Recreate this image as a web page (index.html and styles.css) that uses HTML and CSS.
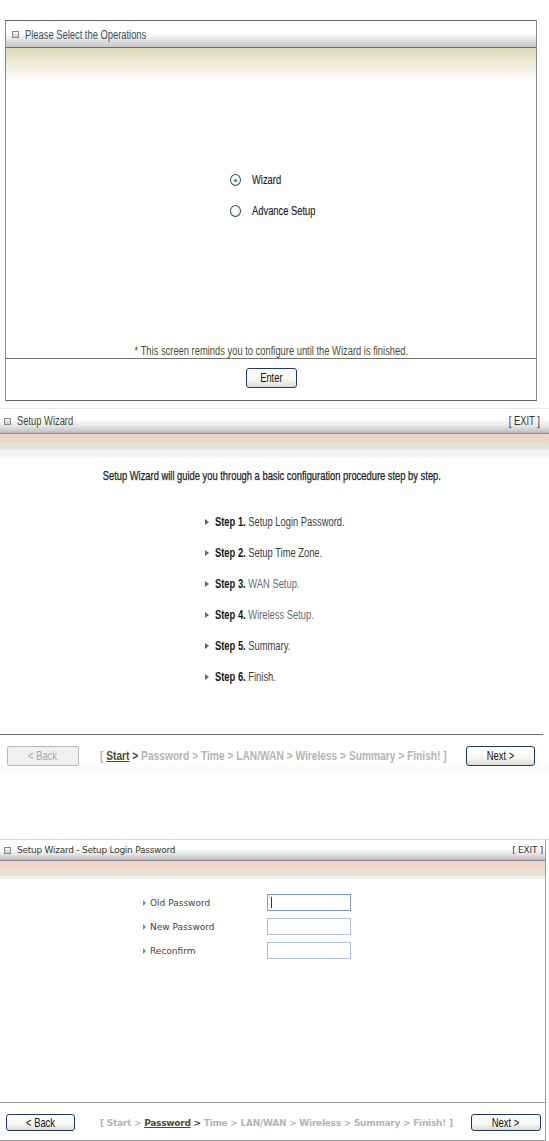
FILE: index.html
```html
<!DOCTYPE html>
<html>
<head>
<meta charset="utf-8">
<link rel="stylesheet" href="styles.css">
</head>
<body>
<div class="panel ops">
  <div class="hdr"><span class="sq"></span><span class="ttl nx">Please Select the Operations</span></div>
  <div class="ops-body">
    <div class="radios">
      <div class="radio"><span class="rb on"></span><span class="nx">Wizard</span></div>
      <div class="radio"><span class="rb"></span><span class="nx">Advance Setup</span></div>
    </div>
    <p class="note"><span class="nx nc">* This screen reminds you to configure until the Wizard is finished.</span></p>
  </div>
  <div class="ops-foot"><button class="btn"><span class="nx nc">Enter</span></button></div>
</div>

<div class="wiz w2">
  <div class="whdr"><span class="sq"></span><span class="ttl nx">Setup Wizard</span><span class="exit"><span class="nx nr">[ EXIT ]</span></span></div>
  <div class="band"></div>
  <div class="w2-body">
    <p class="intro"><span class="nx nc">Setup Wizard will guide you through a basic configuration procedure step by step.</span></p>
    <ul class="steps">
      <li><span class="nx"><b>Step 1.</b> Setup Login Password.</span></li>
      <li><span class="nx"><b>Step 2.</b> Setup Time Zone.</span></li>
      <li class="lt"><span class="nx"><b>Step 3.</b> WAN Setup.</span></li>
      <li class="lt"><span class="nx"><b>Step 4.</b> Wireless Setup.</span></li>
      <li><span class="nx"><b>Step 5.</b> Summary.</span></li>
      <li><span class="nx"><b>Step 6.</b> Finish.</span></li>
    </ul>
  </div>
  <div class="nav n2">
    <button class="btn sm dis"><span class="nx nc">&lt; Back</span></button>
    <span class="crumb"><span class="nx wide">[ <u class="cur">Start</u> <span class="gt">&gt;</span> Password &gt; Time &gt; LAN/WAN &gt; Wireless &gt; Summary &gt; Finish! ]</span></span>
    <button class="btn sm next"><span class="nx nc">Next &gt;</span></button>
  </div>
  <div class="gap2"></div>
</div>

<div class="wiz w3">
  <div class="whdr"><span class="sq"></span><span class="ttl">Setup Wizard - Setup Login Password</span><span class="exit">[ EXIT ]</span></div>
  <div class="band"></div>
  <div class="w3-body">
    <div class="fields">
      <div class="frow"><span class="lab">Old Password</span><span class="inp focus"></span></div>
      <div class="frow"><span class="lab">New Password</span><span class="inp"></span></div>
      <div class="frow"><span class="lab">Reconfirm</span><span class="inp"></span></div>
    </div>
  </div>
  <div class="nav n3">
    <button class="btn sm"><span class="nx nc">&lt; Back</span></button>
    <span class="crumb">[ Start &gt; <u class="cur">Password</u> <span class="gt">&gt;</span> Time &gt; LAN/WAN &gt; Wireless &gt; Summary &gt; Finish! ]</span>
    <button class="btn sm next"><span class="nx nc">Next &gt;</span></button>
  </div>
</div>
</body>
</html>
```

FILE: styles.css
```css
html, body { margin: 0; padding: 0; background: #fff; }
body {
  width: 549px;
  height: 1141px;
  overflow: hidden;
  font-family: "Liberation Sans", Arial, sans-serif;
  font-size: 12px;
  color: #333;
}
p { margin: 0; }
ul { margin: 0; padding: 0; list-style: none; }

/* narrow (condensed) text, as Arial Narrow in the original */
.nx {
  display: inline-block;
  white-space: nowrap;
  transform: scaleX(0.78);
  transform-origin: 0 50%;
}
.nx.nc { transform-origin: 50% 50%; }
.nx.nr { transform-origin: 100% 50%; }
.nx.wide { transform: scaleX(0.85); }

.sq {
  display: inline-block;
  width: 5px; height: 5px;
  border: 1px solid #8a8a8a;
  background: linear-gradient(#fff, #c8c8c8);
  margin-right: 6px;
  flex: none;
}

/* panel 1 */
.ops {
  margin: 20px 12px 0 5px;
  border: 1px solid #8c8c8c;
  border-top-color: #6a6a6a;
  border-bottom-color: #6a6a6a;
}
.hdr {
  height: 26px;
  display: flex;
  align-items: center;
  padding-left: 6px;
  background: linear-gradient(#fff 0%, #fff 45%, #ececee 65%, #c4c4c8 100%);
  border-bottom: 1px solid #707070;
}
.hdr .sq { margin-right: 6px; }
.hdr .ttl { color: #2f5460; font-size: 12px; margin-top: 1px; }
.ops-body {
  height: 310px;
  background: linear-gradient(#dcd8b8 0px, #ece9d6 14px, #fff 34px, #fff 100%);
  display: flex;
  flex-direction: column;
  border-bottom: 1px solid #707070;
}
.radios {
  margin-top: 124px;
  padding-left: 224px;
  display: flex;
  flex-direction: column;
  gap: 15px;
}
.radio {
  display: flex;
  align-items: center;
  height: 16px;
  color: #1e1e1e;
  font-size: 12px;
  -webkit-text-stroke: 0.15px #1e1e1e;
}
.rb {
  width: 9px; height: 10px;
  border: 1px solid #2c4c78;
  border-radius: 50%;
  background: radial-gradient(circle at 40% 40%, #fff 30%, #dcdcd8 100%);
  margin-right: 11px;
  display: flex;
  align-items: center;
  justify-content: center;
  flex: none;
}
.rb.on::after {
  content: "";
  width: 3px; height: 3px;
  border-radius: 50%;
  background: #21a121;
}
.note {
  margin-top: auto;
  text-align: center;
  color: #4d4d2e;
  font-size: 12px;
  line-height: 14px;
}
.ops-foot {
  height: 41px;
  display: flex;
  justify-content: center;
  align-items: flex-start;
  padding-top: 9px;
  box-sizing: border-box;
}
.btn {
  font-family: "Liberation Sans", Arial, sans-serif;
  font-size: 12px;
  color: #111;
  height: 20px;
  width: 51px;
  padding: 0;
  border: 1px solid #1d3a66;
  border-radius: 3px;
  background: linear-gradient(#fff 0%, #f6f6f2 60%, #dcdcd4 100%);
  overflow: visible;
}

/* wizard panels */
.w2 { margin-top: 7px; }
.whdr {
  height: 24px;
  display: flex;
  align-items: center;
  padding-left: 4px;
  padding-right: 9px;
  border-top: 1px solid #e8e8e8;
  border-bottom: 1px solid #8a8a8a;
  background: linear-gradient(#fff 0%, #fff 40%, #e6e6e8 70%, #bdbdc0 100%);
}
.whdr .ttl { color: #3e4a2e; font-size: 12px; }
.whdr .exit { margin-left: auto; color: #333; font-size: 12px; }
.band {
  height: 24px;
  background: linear-gradient(#f1d6c8 0px, #f1d6c8 7px, #e4e3d2 9px, #e4e3d2 14px, #f0f0f0 16px, #f4f4f4 22px, #fff 24px);
}
.w2-body {
  height: 266px;
  border-bottom: 1px solid #6e6e6e;
  margin-right: 6px;
}
.intro {
  margin-top: 10px;
  text-align: center;
  color: #1c1c1c;
  font-size: 12px;
  line-height: 16px;
  -webkit-text-stroke: 0.25px #1c1c1c;
}
.steps {
  margin-top: 30px;
  padding-left: 205px;
  display: flex;
  flex-direction: column;
  gap: 15px;
}
.steps li {
  height: 16px;
  line-height: 16px;
  display: flex;
  align-items: center;
  color: #3c3c3c;
  font-size: 12px;
}
.steps li.lt { color: #6a6a6a; }
.steps li b { color: #151515; }
.steps li::before {
  content: "";
  flex: none;
  width: 0; height: 0;
  border-left: 4px solid #666;
  border-top: 3.5px solid transparent;
  border-bottom: 3.5px solid transparent;
  margin-right: 6px;
}

.nav {
  display: flex;
  align-items: center;
  height: 20px;
  margin-top: 11px;
}
.btn.sm { width: 72px; height: 20px; font-size: 12px; flex: none; }
.btn.next { margin-left: auto; width: 69px; }
.btn.dis { color: #a8a8a8; border-color: #b8b8b8; background: #f0f0f0; border-radius: 2px; }
.n2 { padding-left: 7px; padding-right: 14px; }
.n2 .crumb { margin-left: 21px; width: 345px; flex: none; }
.crumb {
  color: #b4b4b4;
  font-size: 12px;
  font-weight: bold;
  white-space: nowrap;
}
.crumb .cur { color: #4e4e1e; text-decoration-color: #4e4e1e; }
.crumb .gt { color: #444; }
.gap2 {
  height: 74px;
  border-bottom: 1px solid #d8d8d8;
  box-sizing: border-box;
  background: linear-gradient(#fbfbfb 0, #fbfbfb 6px, #fff 7px);
}

/* panel 3 */
.w3 {
  border-right: 1px solid #9a9a9a;
  border-bottom: 1px solid #9a9a9a;
  width: 546px;
  box-sizing: border-box;
}
.w3 .whdr { height: 20px; border-top: none; padding-left: 4px; padding-right: 2px; }
.w3 .whdr .ttl, .w3 .whdr .exit {
  font-family: "DejaVu Sans", Verdana, sans-serif;
  font-size: 9px;
  letter-spacing: -0.25px;
  color: #333;
}
.w3 .whdr .ttl { color: #3c3c20; }
.w3 .band { height: 18px; }
.w3-body {
  height: 223px;
  border-bottom: 1px solid #9a9a9a;
}
.fields {
  padding-top: 15px;
  padding-left: 143px;
  display: flex;
  flex-direction: column;
  gap: 7px;
}
.frow { display: flex; align-items: center; height: 17px; }
.lab {
  width: 124px;
  font-family: "DejaVu Sans", Verdana, sans-serif;
  font-size: 9px;
  color: #444;
  display: flex;
  align-items: center;
}
.lab::before {
  content: "";
  border-left: 3px solid #36a8b8;
  border-top: 3px solid transparent;
  border-bottom: 3px solid transparent;
  margin-right: 4px;
}
.inp {
  width: 82px;
  height: 15px;
  border: 1px solid #a8c0dc;
  background: #fff;
  position: relative;
}
.inp.focus { border-color: #7f9db9; }
.inp.focus::after {
  content: "";
  position: absolute;
  left: 3px; top: 2px;
  width: 1px; height: 11px;
  background: #333;
}
.n3 { padding-left: 6px; padding-right: 4px; margin-top: 11px; height: 17px; margin-bottom: 9px; }
.n3 .btn.sm { height: 17px; width: 69px; font-size: 12px; }
.n3 .btn.next { width: 70px; }
.n3 .crumb {
  margin-left: 25px;
  font-family: "DejaVu Sans", Verdana, sans-serif;
  font-size: 9px;
  letter-spacing: -0.25px;
}
```
